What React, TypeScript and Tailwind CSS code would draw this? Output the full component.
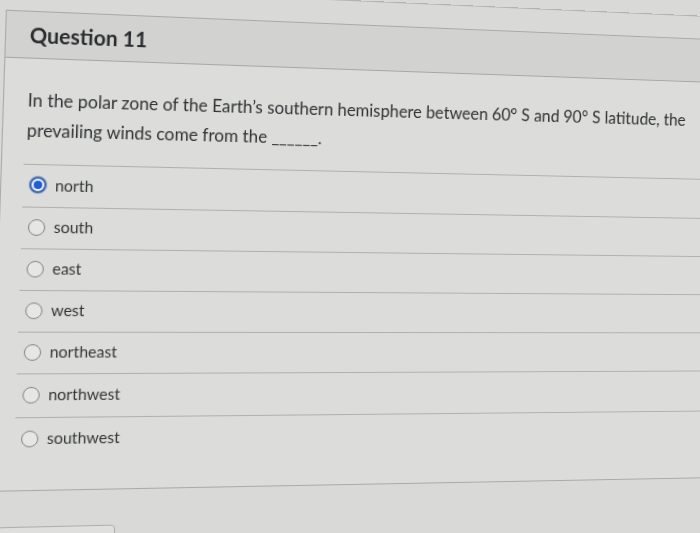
import React from "react";

const options = ["north", "south", "east", "west", "northeast", "northwest", "southwest"];

function Radio({ checked }: { checked: boolean }) {
  if (checked) {
    return (
      <span className="flex h-[16px] w-[16px] shrink-0 items-center justify-center rounded-full border-[2px] border-[#3d64b0] bg-[#f4f6fa] shadow-[0_0_0_1px_rgba(120,150,210,0.35)]">
        <span className="h-[8px] w-[8px] rounded-full bg-[#1c5ed8]" />
      </span>
    );
  }
  return <span className="h-[16px] w-[16px] shrink-0 rounded-full border-[1.5px] border-[#858786] bg-[#e6e7e5]" />;
}

export default function App() {
  return (
    <div className="h-[533px] w-[700px] overflow-hidden bg-[#d9dad8] font-['Lato','Noto_Sans',sans-serif]">
      <div className="h-[560px] w-[760px] border-t border-[#b3b4b2] [transform:perspective(1000px)_rotateY(7.5deg)_skewX(-1.8deg)] [transform-origin:350px_340px]">
        <div className="pl-[8px] pt-[23px]">
          <div className="border-b border-l border-t border-[#a9aaa8] bg-[#dcdddb]">
            <div className="flex h-[45px] items-center border-b border-[#a7a8a6] bg-[#d2d3d1] pl-[22px]">
              <h2 className="text-[20px] font-bold text-[#2b2c2e]">Question 11</h2>
            </div>
            <div className="pb-[18px] pl-[22px] pt-[25px]">
              <p className="w-[690px] text-[16.8px] leading-[29px] text-[#2f3133]">
                In the polar zone of the Earth’s southern hemisphere between 60° S and 90° S latitude, the prevailing winds come from the ______.
              </p>
            </div>
            <div className="ml-[20px] pb-[28px]">
              {options.map((o, i) => (
                <div
                  key={o}
                  className={`flex items-center gap-[8px] border-t border-[#b0b1af] pb-[2px] pl-[6px] ${
                    i === 0 ? "h-[41px]" : i >= 5 ? "h-[42px]" : "h-[40px]"
                  }`}
                >
                  <Radio checked={i === 0} />
                  <span className="text-[15px] text-[#333537]">{o}</span>
                </div>
              ))}
            </div>
          </div>
          <div className="mt-[34px] h-[40px] w-[118px] rounded-[4px] border border-[#aeafad] bg-[#dfe0de]" />
        </div>
      </div>
    </div>
  );
}
